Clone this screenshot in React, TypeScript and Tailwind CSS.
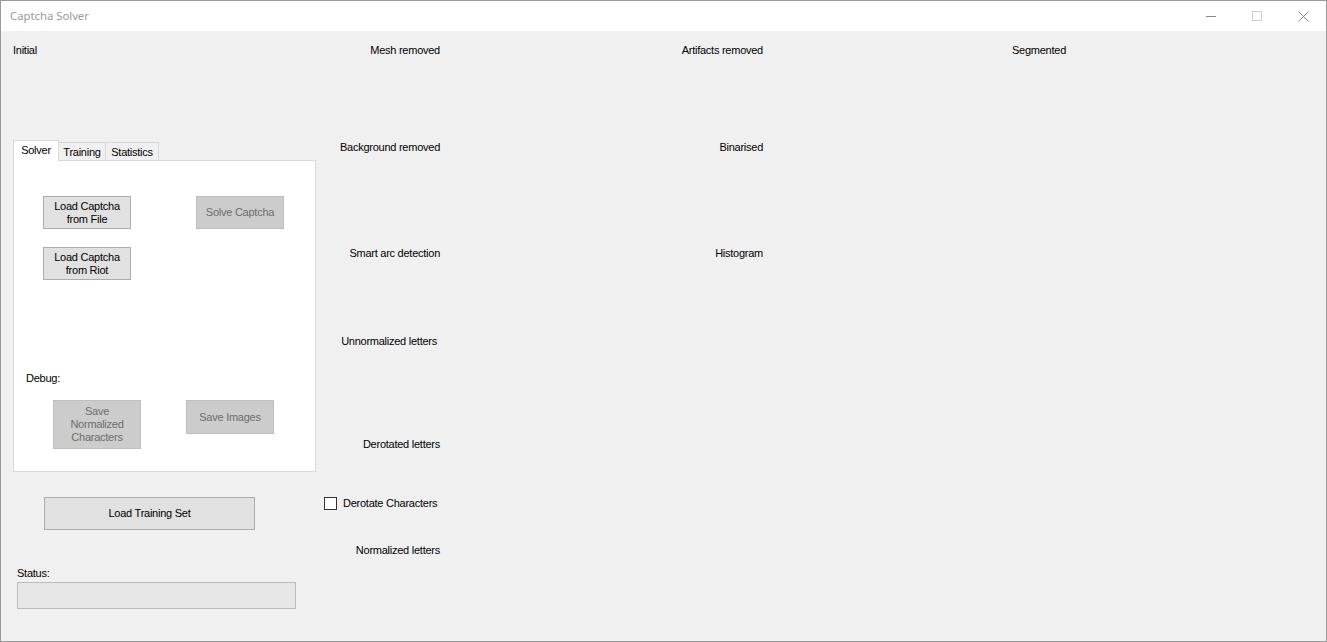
import React from "react";

function Btn({
  children,
  w,
  h,
  disabled,
  className = "",
}: {
  children: React.ReactNode;
  w: string;
  h: string;
  disabled?: boolean;
  className?: string;
}) {
  return (
    <div
      className={`${w} ${h} ${className} flex items-center justify-center text-center border ${
        disabled
          ? "bg-[#cccccc] border-[#bfbfbf] text-[#6d6d6d]"
          : "bg-[#e1e1e1] border-[#adadad] text-black"
      }`}
    >
      <span>{children}</span>
    </div>
  );
}

export default function App() {
  return (
    <div className="w-[1327px] h-[642px] flex flex-col border border-[#9a9a9a] bg-white overflow-hidden font-['Liberation_Sans',Arial,sans-serif]">
      {/* Title bar */}
      <div className="h-[30px] shrink-0 flex items-center justify-between bg-white">
        <div className="pl-[9px] text-[11.3px] text-[#999999] font-['Noto_Sans',sans-serif]">
          Captcha Solver
        </div>
        <div className="flex h-full">
          <div className="w-[46px] h-full flex items-center justify-center">
            <svg width="10" height="10" viewBox="0 0 10 10">
              <line x1="0" y1="5.5" x2="10" y2="5.5" stroke="#8a8a8a" strokeWidth="1" />
            </svg>
          </div>
          <div className="w-[46px] h-full flex items-center justify-center">
            <svg width="10" height="10" viewBox="0 0 10 10">
              <rect x="0.5" y="0.5" width="9" height="9" fill="none" stroke="#cccccc" strokeWidth="1" />
            </svg>
          </div>
          <div className="w-[46px] h-full flex items-center justify-center">
            <svg width="11" height="11" viewBox="0 0 11 11">
              <line x1="0.5" y1="0.5" x2="10.5" y2="10.5" stroke="#8a8a8a" strokeWidth="1" />
              <line x1="10.5" y1="0.5" x2="0.5" y2="10.5" stroke="#8a8a8a" strokeWidth="1" />
            </svg>
          </div>
        </div>
      </div>

      {/* Content */}
      <div className="flex-1 bg-[#f0f0f0] flex text-[11px] leading-[13px] tracking-[-0.25px] text-black">
        {/* Column A */}
        <div className="w-[320px] shrink-0 pl-[12px] flex flex-col items-start">
          <div className="mt-[13px]">Initial</div>

          {/* Tab control */}
          <div className="mt-[83px] w-[303px] flex flex-col">
            <div className="h-[20px] flex items-end">
              <div className="relative z-10 w-[46px] h-[21px] mb-[-1px] bg-white border-l border-t border-r border-[#d9d9d9] flex items-start justify-center pt-[3px]">
                Solver
              </div>
              <div className="w-[47px] h-[18px] border-t border-r border-[#d9d9d9] flex items-center justify-center pt-[1px]">
                Training
              </div>
              <div className="w-[53px] h-[18px] border-t border-r border-[#d9d9d9] flex items-center justify-center pt-[1px]">
                Statistics
              </div>
            </div>
            <div className="h-[312px] w-[303px] bg-white border border-[#d9d9d9] flex flex-col items-start">
              <div className="mt-[35px] pl-[29px] flex gap-[65px]">
                <Btn w="w-[88px]" h="h-[33px]">
                  Load Captcha
                  <br />
                  from File
                </Btn>
                <Btn w="w-[88px]" h="h-[33px]" disabled>
                  Solve Captcha
                </Btn>
              </div>
              <Btn w="w-[88px]" h="h-[33px]" className="mt-[18px] ml-[29px]">
                Load Captcha
                <br />
                from Riot
              </Btn>
              <div className="mt-[92px] ml-[12px]">Debug:</div>
              <div className="mt-[15px] pl-[39px] flex items-start gap-[45px]">
                <Btn w="w-[88px]" h="h-[49px]" disabled>
                  Save
                  <br />
                  Normalized
                  <br />
                  Characters
                </Btn>
                <Btn w="w-[88px]" h="h-[34px]" disabled>
                  Save Images
                </Btn>
              </div>
            </div>
          </div>

          <Btn w="w-[211px]" h="h-[33px]" className="mt-[25px] ml-[31px]">
            Load Training Set
          </Btn>
          <div className="mt-[37px] ml-[4px]">Status:</div>
          <div className="mt-[2px] ml-[4px] w-[279px] h-[27px] bg-[#e6e6e6] border border-[#bcbcbc]" />
        </div>

        {/* Column B */}
        <div className="w-[119px] shrink-0 flex flex-col items-end">
          <div className="mt-[13px] whitespace-nowrap">Mesh removed</div>
          <div className="mt-[84px] whitespace-nowrap">Background removed</div>
          <div className="mt-[93px] whitespace-nowrap">Smart arc detection</div>
          <div className="mt-[75px] mr-[3px] whitespace-nowrap">Unnormalized letters</div>
          <div className="mt-[90px] whitespace-nowrap">Derotated letters</div>
          <div className="mt-[46px] self-start ml-[3px] flex items-center gap-[6px] whitespace-nowrap">
            <div className="w-[13px] h-[13px] bg-white border border-[#333333]" />
            <span>Derotate Characters</span>
          </div>
          <div className="mt-[34px] whitespace-nowrap">Normalized letters</div>
        </div>

        {/* Column C */}
        <div className="w-[323px] shrink-0 flex flex-col items-end">
          <div className="mt-[13px] whitespace-nowrap">Artifacts removed</div>
          <div className="mt-[84px] whitespace-nowrap">Binarised</div>
          <div className="mt-[93px] whitespace-nowrap">Histogram</div>
        </div>

        {/* Column D */}
        <div className="flex-1 pl-[249px] flex flex-col items-start">
          <div className="mt-[13px]">Segmented</div>
        </div>
      </div>
    </div>
  );
}
